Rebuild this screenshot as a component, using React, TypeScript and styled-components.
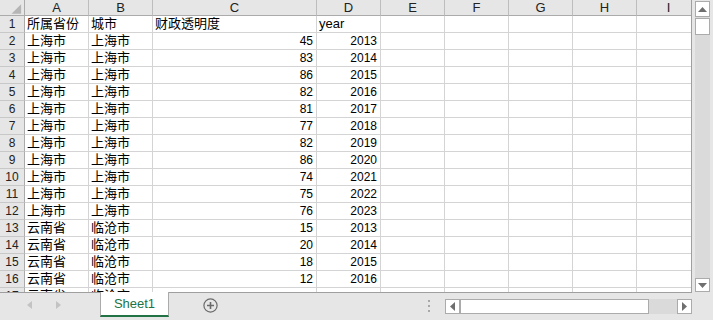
import styled, { createGlobalStyle } from "styled-components";

const GlobalStyle = createGlobalStyle`
  html, body { margin: 0; padding: 0; background: #e6e6e6; }
  body { font-family: "Liberation Sans", "Noto Sans CJK SC", sans-serif; }
`;

const cols = ["A", "B", "C", "D", "E", "F", "G", "H", "I"];
const widths = [64, 64, 164, 64, 64, 64, 64, 64, 64];

type Row = [string, string, string, string, string];

const rows: Row[] = [
  ["所属省份", "城市", "财政透明度", "year", ""],
  ["上海市", "上海市", "45", "2013", "n"],
  ["上海市", "上海市", "83", "2014", "n"],
  ["上海市", "上海市", "86", "2015", "n"],
  ["上海市", "上海市", "82", "2016", "n"],
  ["上海市", "上海市", "81", "2017", "n"],
  ["上海市", "上海市", "77", "2018", "n"],
  ["上海市", "上海市", "82", "2019", "n"],
  ["上海市", "上海市", "86", "2020", "n"],
  ["上海市", "上海市", "74", "2021", "n"],
  ["上海市", "上海市", "75", "2022", "n"],
  ["上海市", "上海市", "76", "2023", "n"],
  ["云南省", "临沧市", "15", "2013", "n"],
  ["云南省", "临沧市", "20", "2014", "n"],
  ["云南省", "临沧市", "18", "2015", "n"],
  ["云南省", "临沧市", "12", "2016", "n"],
  ["云南省", "临沧市", "", "", "n"],
];

export default function App() {
  return (
    <>
      <GlobalStyle />
      <Window>
        <Body>
          <Sheet>
            <Corner>
              <svg width="25" height="16" viewBox="0 0 25 16">
                <polygon points="22,4 22,14 12,14" fill="#b5b5b5" />
              </svg>
            </Corner>
            {cols.map((c) => (
              <ColHead key={c}>{c}</ColHead>
            ))}
            {rows.map((r, i) => (
              <RowFrag key={i} row={r} n={i + 1} />
            ))}
          </Sheet>
          <VScroll>
            <VTrack>
              <ArrowBtn $h={16}>
                <svg width="9" height="5" viewBox="0 0 9 5">
                  <polygon points="0,5 4.5,0 9,5" fill="#6f6f6f" />
                </svg>
              </ArrowBtn>
              <Thumb $h={17} />
              <Spacer />
              <ArrowBtn $h={14}>
                <svg width="9" height="5" viewBox="0 0 9 5">
                  <polygon points="0,0 4.5,5 9,0" fill="#6f6f6f" />
                </svg>
              </ArrowBtn>
            </VTrack>
          </VScroll>
        </Body>
        <TabBar>
          <Nav>
            <svg width="5" height="8" viewBox="0 0 5 8">
              <polygon points="5,0 0,4 5,8" fill="#c3c3c3" />
            </svg>
            <svg width="5" height="8" viewBox="0 0 5 8">
              <polygon points="0,0 5,4 0,8" fill="#c3c3c3" />
            </svg>
          </Nav>
          <Tab>Sheet1</Tab>
          <AddBtn>
            <svg width="15" height="15" viewBox="0 0 15 15">
              <circle cx="7.5" cy="7.5" r="6.6" fill="none" stroke="#6a6a6a" strokeWidth="1.2" />
              <path d="M7.5 4v7M4 7.5h7" stroke="#6a6a6a" strokeWidth="1.6" />
            </svg>
          </AddBtn>
          <Dots>
            <Dot />
            <Dot />
            <Dot />
          </Dots>
          <HScroll>
            <HBtn>
              <svg width="5" height="9" viewBox="0 0 5 9">
                <polygon points="5,0 0,4.5 5,9" fill="#6f6f6f" />
              </svg>
            </HBtn>
            <HThumb />
            <HSpacer />
            <HBtn>
              <svg width="5" height="9" viewBox="0 0 5 9">
                <polygon points="0,0 5,4.5 0,9" fill="#6f6f6f" />
              </svg>
            </HBtn>
          </HScroll>
        </TabBar>
      </Window>
    </>
  );
}

function RowFrag({ row, n }: { row: Row; n: number }) {
  const isNum = row[4] === "n";
  return (
    <>
      <RowHead>{n}</RowHead>
      <Cell>{row[0]}</Cell>
      <Cell>{row[1]}</Cell>
      <Cell $num={isNum}>{row[2]}</Cell>
      <Cell $num={isNum}>{row[3]}</Cell>
      <Cell />
      <Cell />
      <Cell />
      <Cell />
      <Cell />
    </>
  );
}

const Window = styled.div`
  width: 713px;
  height: 320px;
  display: flex;
  flex-direction: column;
  background: #e6e6e6;
  overflow: hidden;
`;

const Body = styled.div`
  display: flex;
  height: 293px;
`;

const Sheet = styled.div`
  width: 692px;
  height: 293px;
  box-sizing: border-box;
  border-right: 1px solid #9f9f9f;
  border-bottom: 1px solid #9f9f9f;
  background: #fff;
  display: grid;
  grid-template-columns: 25px ${widths.map((w) => `${w}px`).join(" ")};
  grid-template-rows: 16px;
  grid-auto-rows: 17px;
  overflow: hidden;
`;

const Corner = styled.div`
  background: #e6e6e6;
  box-sizing: border-box;
  border-right: 1px solid #ababab;
  border-bottom: 1px solid #ababab;
  display: flex;
`;

const ColHead = styled.div`
  background: #e6e6e6;
  box-sizing: border-box;
  border-right: 1px solid #bdbdbd;
  border-bottom: 1px solid #ababab;
  color: #222;
  font-size: 13px;
  line-height: 15px;
  text-align: center;
`;

const RowHead = styled.div`
  background: #e6e6e6;
  box-sizing: border-box;
  border-right: 1px solid #ababab;
  border-bottom: 1px solid #c8c8c8;
  color: #222;
  font-size: 12px;
  line-height: 16px;
  text-align: center;
`;

const Cell = styled.div<{ $num?: boolean }>`
  box-sizing: border-box;
  border-right: 1px solid #d4d4d4;
  border-bottom: 1px solid #d4d4d4;
  color: #000;
  font-size: ${(p) => (p.$num ? "12px" : "13px")};
  line-height: 16px;
  padding: ${(p) => (p.$num ? "0 3px 0 0" : "0 0 0 2px")};
  text-align: ${(p) => (p.$num ? "right" : "left")};
  white-space: nowrap;
  overflow: hidden;
`;

const VScroll = styled.div`
  width: 21px;
  padding: 1px 3px 0 3px;
  box-sizing: border-box;
  display: flex;
`;

const VTrack = styled.div`
  width: 15px;
  height: 291px;
  background: #dadada;
  display: flex;
  flex-direction: column;
`;

const ArrowBtn = styled.div<{ $h: number }>`
  height: ${(p) => p.$h}px;
  box-sizing: border-box;
  background: #fff;
  border: 1px solid #ababab;
  display: flex;
  align-items: center;
  justify-content: center;
`;

const Thumb = styled.div<{ $h: number }>`
  height: ${(p) => p.$h}px;
  box-sizing: border-box;
  background: #fff;
  border: 1px solid #ababab;
  margin-top: 1px;
`;

const Spacer = styled.div`
  flex: 1;
`;

const TabBar = styled.div`
  height: 27px;
  display: flex;
  align-items: flex-start;
`;

const Nav = styled.div`
  width: 100px;
  height: 24px;
  display: flex;
  align-items: center;
  gap: 24px;
  padding-left: 27px;
  box-sizing: border-box;
`;

const Tab = styled.div`
  width: 69px;
  height: 25px;
  margin-top: -1px;
  box-sizing: border-box;
  background: #fff;
  border-left: 1px solid #ababab;
  border-right: 1px solid #ababab;
  border-bottom: 2px solid #217346;
  color: #217346;
  font-size: 13px;
  line-height: 23px;
  text-align: center;
`;

const AddBtn = styled.div`
  width: 15px;
  height: 15px;
  margin: 5px 0 0 34px;
  display: flex;
`;

const Dots = styled.div`
  display: flex;
  flex-direction: column;
  gap: 3px;
  margin: 7px 0 0 210px;
`;

const Dot = styled.div`
  width: 2px;
  height: 2px;
  background: #a8a8a8;
`;

const HScroll = styled.div`
  display: flex;
  margin: 6px 0 0 15px;
  width: 247px;
  height: 15px;
  background: #dadada;
`;

const HBtn = styled.div`
  width: 15px;
  height: 15px;
  box-sizing: border-box;
  background: #fff;
  border: 1px solid #ababab;
  display: flex;
  align-items: center;
  justify-content: center;
`;

const HThumb = styled.div`
  width: 189px;
  height: 15px;
  box-sizing: border-box;
  background: #fff;
  border: 1px solid #ababab;
`;

const HSpacer = styled.div`
  flex: 1;
`;
